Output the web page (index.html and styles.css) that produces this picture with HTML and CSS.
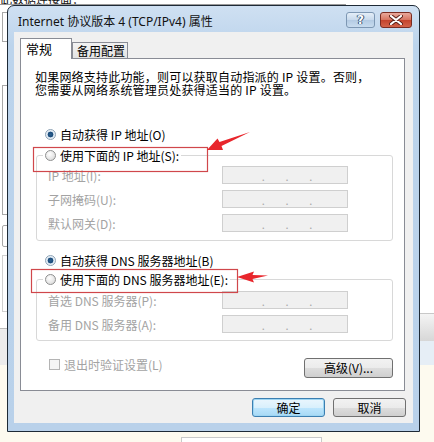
FILE: index.html
```html
<!DOCTYPE html>
<html>
<head>
    <meta charset="UTF-8">
    <title>Internet 协议版本 4 (TCP/IPv4) 属性</title>
    <link rel="stylesheet" href="styles.css">
</head>
<body>
    <!-- 背后的窗口 -->
    <div class="backdrop">
        <div class="bg-text">此数据连接面：</div>
        <div class="bg-line"></div>
        <div class="bg-box b1"></div>
        <div class="bg-box b2"></div>
        <div class="bg-box b3"></div>
        <div class="bg-box b4"></div>
        <div class="bg-gray-left"></div>
        <div class="bg-right-bar"></div>
        <div class="bg-right-light"></div>
        <div class="bg-bottom"></div>
        <div class="bg-bottom-box"></div>
    </div>

    <div class="window">
        <div class="titlebar">
            <div class="title">Internet 协议版本 4 (TCP/IPv4) 属性</div>
            <div class="cap-btn help">?</div>
            <div class="cap-btn close">
                <svg width="14" height="10" viewBox="0 0 14 10">
                    <path d="M2 1 L12 9 M12 1 L2 9" stroke="#5a2018" stroke-width="4" stroke-linecap="round"/>
                    <path d="M2 1 L12 9 M12 1 L2 9" stroke="#ffffff" stroke-width="2.2" stroke-linecap="round"/>
                </svg>
            </div>
        </div>

        <div class="client">
            <div class="tabs">
                <div class="tab active">常规</div>
                <div class="tab">备用配置</div>
            </div>

            <div class="panel">
                <p class="intro">如果网络支持此功能，则可以获取自动指派的 IP 设置。否则，<br>您需要从网络系统管理员处获得适当的 IP 设置。</p>

                <div class="option first"><span class="radio on"></span>自动获得 IP 地址(O)</div>

                <fieldset class="group g1">
                    <legend><span class="option"><span class="radio"></span>使用下面的 IP 地址(S):</span></legend>
                    <div class="row"><span class="label">IP 地址(I):</span><span class="ip"><i>.</i><i>.</i><i>.</i></span></div>
                    <div class="row"><span class="label">子网掩码(U):</span><span class="ip"><i>.</i><i>.</i><i>.</i></span></div>
                    <div class="row"><span class="label">默认网关(D):</span><span class="ip"><i>.</i><i>.</i><i>.</i></span></div>
                </fieldset>

                <div class="option second"><span class="radio on"></span>自动获得 DNS 服务器地址(B)</div>

                <fieldset class="group g2">
                    <legend><span class="option"><span class="radio"></span>使用下面的 DNS 服务器地址(E):</span></legend>
                    <div class="row"><span class="label">首选 DNS 服务器(P):</span><span class="ip"><i>.</i><i>.</i><i>.</i></span></div>
                    <div class="row"><span class="label">备用 DNS 服务器(A):</span><span class="ip"><i>.</i><i>.</i><i>.</i></span></div>
                </fieldset>

                <div class="bottom-row">
                    <div class="check"><span class="checkbox"></span>退出时验证设置(L)</div>
                    <button class="btn adv">高级(V)...</button>
                </div>
            </div>

            <div class="buttons">
                <button class="btn default">确定</button>
                <button class="btn">取消</button>
            </div>
        </div>
    </div>

    <!-- 红色标注 -->
    <svg class="marks" width="434" height="442" viewBox="0 0 434 442">
        <rect x="33.5" y="147.5" width="174" height="24" fill="none" stroke="#d0474b" stroke-width="1.2"/>
        <rect x="31.5" y="269.5" width="206" height="23" fill="none" stroke="#d0474b" stroke-width="1.2"/>
        <polygon points="207,150 223,150 221.5,146 250,132 219.5,142 217.5,138.5" fill="#e8262c"/>
        <polygon points="237,277 254,271.5 252.5,275 268,275.5 252.5,279 254,282.5" fill="#e8262c"/>
    </svg>
</body>
</html>
```

FILE: styles.css
```css
body {
    margin: 0;
    width: 434px;
    height: 442px;
    overflow: hidden;
    position: relative;
    background: #ffffff;
    font-family: "Noto Sans CJK SC", "Noto Sans", sans-serif;
    font-size: 12px;
    color: #000;
}

/* 背景窗口 */
.backdrop div {
    position: absolute;
}
.bg-text {
    left: 0;
    top: -7px;
    font-size: 12px;
    line-height: 12px;
    color: #111;
}
.bg-line {
    left: 0;
    top: 4px;
    width: 346px;
    height: 1px;
    background: #9a9a9a;
}
.bg-box {
    left: 2px;
    width: 8px;
    border: 1px solid #a8a8a8;
    background: #fff;
}
.b1 { top: 12px; height: 28px; }
.b2 { top: 85px; height: 128px; }
.b3 { top: 225px; height: 20px; border-radius: 2px; }
.b4 { top: 255px; height: 55px; border-color: #d0d0d0; }
.bg-gray-left {
    left: 0;
    top: 328px;
    width: 8px;
    height: 114px;
    background: #ececec;
    border-top: 1px solid #bcbcbc;
}
.bg-right-bar {
    left: 420px;
    top: 313px;
    width: 14px;
    height: 28px;
    background: linear-gradient(#f4f4f4, #d6d6d6);
    border-top: 1px solid #c8c8c8;
}
.bg-right-light {
    left: 420px;
    top: 341px;
    width: 14px;
    height: 24px;
    background: #e6eef6;
}
.bg-bottom {
    left: 0;
    top: 365px;
    width: 434px;
    height: 77px;
    background: #fdfaef;
}
.bg-bottom-box {
    left: 181px;
    top: 437px;
    width: 139px;
    height: 10px;
    background: #fff;
    border: 1px solid #c9c9c9;
}

/* 对话框 */
.window {
    position: relative;
    width: 413px;
    height: 427px;
    margin: 5px 0 0 7px;
    box-sizing: border-box;
    border: 1px solid #1e2a36;
    border-radius: 7px 7px 0 0;
    background: linear-gradient(#cfe0f2, #bcd4ec 40px, #b9d1ea);
    display: flex;
    flex-direction: column;
}
.titlebar {
    height: 26px;
    display: flex;
    align-items: center;
    padding: 2px 7px 0 10px;
    box-sizing: border-box;
    gap: 5px;
}
.title {
    flex: 1;
    font-family: "Noto Sans", "Noto Sans CJK SC", sans-serif;
    font-size: 12px;
    margin-top: 2px;
    color: #111;
}
.cap-btn {
    height: 16px;
    box-sizing: border-box;
    border-radius: 3px;
    display: flex;
    align-items: center;
    justify-content: center;
}
.help {
    width: 29px;
    border: 1px solid #7d97b3;
    background: linear-gradient(#e4eef8, #c7d9ec 50%, #b3cae3 51%, #c8dcef);
    color: #fff;
    font-family: "DejaVu Sans", sans-serif;
    font-weight: bold;
    font-size: 12px;
    text-shadow: 0 0 1px #2d4a6c, 0 0 1px #2d4a6c, 1px 0 0 #3b5a7d, -1px 0 0 #3b5a7d;
}
.close {
    width: 32px;
    border: 1px solid #7a2c22;
    background: linear-gradient(#e9a99c, #d6735f 50%, #c4432c 51%, #d2634a);
}

.client {
    flex: 1;
    margin: 0 6px 8px 6px;
    background: #f0f0f0;
    padding: 6px 8px 0 6px;
    display: flex;
    flex-direction: column;
}
.tabs {
    display: flex;
    align-items: flex-end;
    height: 21px;
    margin-bottom: -1px;
    position: relative;
    z-index: 1;
}
.tab {
    box-sizing: border-box;
    border: 1px solid #898c95;
    border-bottom: none;
    height: 16px;
    width: 56px;
    margin-bottom: 1px;
    padding-left: 4px;
    line-height: 15px;
    background: linear-gradient(#f2f2f2, #e3e3e3);
    font-size: 12px;
}
.tab.active {
    width: 52px;
    height: 21px;
    margin-bottom: 0;
    background: #fff;
    font-size: 13px;
    line-height: 19px;
    padding-left: 5px;
}
.panel {
    height: 333px;
    box-sizing: border-box;
    border: 1px solid #898c95;
    background: #fff;
}
.intro {
    margin: 11px 0 0 14px;
    line-height: 13px;
    white-space: nowrap;
    letter-spacing: 0.2px;
}

.option {
    display: flex;
    align-items: center;
    height: 16px;
    gap: 4px;
    white-space: nowrap;
}
.option.first {
    margin: 30px 0 0 24px;
}
.option.second {
    margin: 11px 0 0 24px;
}
.radio {
    width: 11px;
    height: 11px;
    box-sizing: border-box;
    border-radius: 50%;
    border: 1px solid #8e8f8f;
    background: radial-gradient(circle at 40% 35%, #ffffff, #dcdcdc 80%);
}
.radio.on {
    border-color: #8ea3b6;
    background: radial-gradient(circle, #2c5f8f 0, #1a4b7a 2.6px, #d9e6f2 3.2px, #f4f7fa 5px);
}

.group {
    border: 1px solid #d8d8d8;
    border-radius: 3px;
    padding: 0 0 8px 6px;
    margin: 5px 11px 0 15px;
}
.group.g2 {
    margin-top: 3px;
    padding-bottom: 7px;
}
.group legend {
    padding: 0 2px;
}
.row {
    display: flex;
    align-items: center;
    height: 18px;
    margin-top: 6px;
    padding-left: 5px;
}
.g1 .row:first-of-type {
    margin-top: 3px;
}
.g2 .row:first-of-type {
    margin-top: 4px;
}
.label {
    width: 174px;
    color: #a3a3a3;
}
.ip {
    width: 126px;
    height: 18px;
    box-sizing: border-box;
    border: 1px solid #cfcfcf;
    background: #f0f0f0;
    display: flex;
    justify-content: space-evenly;
    padding: 0 14px 0 18px;
    align-items: flex-end;
}
.ip i {
    font-style: normal;
    color: #a8a8a8;
    font-size: 11px;
    line-height: 14px;
}

.bottom-row {
    display: flex;
    justify-content: space-between;
    align-items: flex-start;
    margin: 17px 11px 0 28px;
}
.check {
    display: flex;
    align-items: center;
    gap: 4px;
    height: 12px;
    color: #a3a3a3;
}
.checkbox {
    width: 11px;
    height: 11px;
    box-sizing: border-box;
    border: 1px solid #b4b4b4;
    background: #f4f4f4;
}

.btn {
    font-family: "Noto Sans CJK SC", "Noto Sans", sans-serif;
    font-size: 12px;
    color: #000;
    padding: 0;
    width: 73px;
    height: 19px;
    border: 1px solid #707070;
    border-radius: 3px;
    background: linear-gradient(#f2f2f2, #ebebeb 50%, #dddddd 51%, #cfcfcf);
    line-height: 16px;
}
.btn.adv {
    width: 89px;
    height: 20px;
}
.btn.default {
    border-color: #3c7fb1;
    background: linear-gradient(#eaf6fd, #d9f0fc 50%, #bee6fd 51%, #a7d9f5);
    box-shadow: inset 0 0 0 1px #9ed5f2;
}
.buttons {
    display: flex;
    justify-content: flex-end;
    gap: 8px;
    margin: 7px -1px 0 0;
}

.marks {
    position: absolute;
    left: 0;
    top: 0;
    pointer-events: none;
}
```
